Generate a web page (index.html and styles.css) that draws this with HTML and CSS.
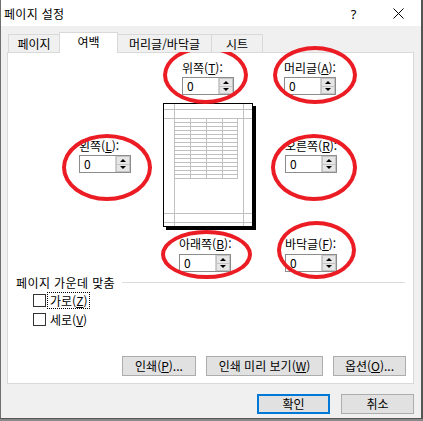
FILE: index.html
```html
<!DOCTYPE html>
<html lang="ko">
<head>
<meta charset="utf-8">
<title>페이지 설정</title>
<link rel="stylesheet" href="styles.css">
</head>
<body>
<div class="window">
  <div class="titlebar">
    <span class="title">페이지 설정</span>
    <span class="cap-btn help">?</span>
    <span class="cap-btn close">
      <svg width="11" height="11" viewBox="0 0 11 11"><path d="M0.5 0.5 L10.5 10.5 M10.5 0.5 L0.5 10.5" stroke="#000" stroke-width="1" fill="none"/></svg>
    </span>
  </div>
  <div class="content">
    <div class="tabs">
      <div class="tab">페이지</div>
      <div class="tab active">여백</div>
      <div class="tab tab-wide">머리글/바닥글</div>
      <div class="tab">시트</div>
    </div>
    <div class="panel">
      <div class="margins">
        <div class="field f-top">
          <div class="lbl">위쪽(<u>T</u>):</div>
          <div class="spin"><span class="val">0</span><span class="arrows"><span class="arr"><i class="up"></i></span><span class="arr"><i class="down"></i></span></span></div>
        </div>
        <div class="field f-header">
          <div class="lbl">머리글(<u>A</u>):</div>
          <div class="spin"><span class="val">0</span><span class="arrows"><span class="arr"><i class="up"></i></span><span class="arr"><i class="down"></i></span></span></div>
        </div>
        <div class="field f-left">
          <div class="lbl">왼쪽(<u>L</u>):</div>
          <div class="spin"><span class="val">0</span><span class="arrows"><span class="arr"><i class="up"></i></span><span class="arr"><i class="down"></i></span></span></div>
        </div>
        <div class="preview">
          <svg width="93" height="127" viewBox="0 0 93 127">
            <rect x="3" y="3" width="90" height="124" fill="#000"/>
            <rect x="0.5" y="0.5" width="89" height="123" fill="#fff" stroke="#000"/>
            <g stroke="#c0c0c0" stroke-width="1" fill="none">
              <path d="M11.5 1 V123 M80.5 1 V123 M1 6.5 H89 M1 15.5 H89 M1 110.5 H89 M1 119.5 H89"/>
              <path d="M27.5 15 V76 M43.5 15 V76 M59.5 15 V76 M74.5 15 V76"/>
              <path d="M11 19.5 H75 M11 23.5 H75 M11 27.5 H75 M11 31.5 H75 M11 35.5 H75 M11 39.5 H75 M11 43.5 H75 M11 47.5 H75 M11 51.5 H75 M11 55.5 H75 M11 59.5 H75 M11 63.5 H75 M11 67.5 H75 M11 71.5 H75 M11 75.5 H75"/>
            </g>
          </svg>
        </div>
        <div class="field f-right">
          <div class="lbl">오른쪽(<u>R</u>):</div>
          <div class="spin"><span class="val">0</span><span class="arrows"><span class="arr"><i class="up"></i></span><span class="arr"><i class="down"></i></span></span></div>
        </div>
        <div class="field f-bottom">
          <div class="lbl">아래쪽(<u>B</u>):</div>
          <div class="spin"><span class="val">0</span><span class="arrows"><span class="arr"><i class="up"></i></span><span class="arr"><i class="down"></i></span></span></div>
        </div>
        <div class="field f-footer">
          <div class="lbl">바닥글(<u>F</u>):</div>
          <div class="spin"><span class="val">0</span><span class="arrows"><span class="arr"><i class="up"></i></span><span class="arr"><i class="down"></i></span></span></div>
        </div>
      </div>
      <div class="center-group">
        <div class="group-title">페이지 가운데 맞춤</div>
        <label class="check"><span class="box"></span><span class="check-lbl focused">가로(<u>Z</u>)</span></label>
        <label class="check"><span class="box"></span><span class="check-lbl">세로(<u>V</u>)</span></label>
      </div>
      <div class="panel-buttons">
        <button class="btn b-print">인쇄(<u>P</u>)...</button>
        <button class="btn b-preview">인쇄 미리 보기(<u>W</u>)</button>
        <button class="btn b-options">옵션(<u>O</u>)...</button>
      </div>
    </div>
    <div class="dialog-buttons">
      <button class="btn default">확인</button>
      <button class="btn">취소</button>
    </div>
  </div>
  <div class="mark m-top"></div>
  <div class="mark m-header"></div>
  <div class="mark m-left"></div>
  <div class="mark m-right"></div>
  <div class="mark m-bottom"></div>
  <div class="mark m-footer"></div>
</div>
</body>
</html>
```
FILE: styles.css
```css
* { box-sizing: border-box; }
html, body { margin: 0; padding: 0; }
body {
  background: #8a8a8a;
  font-family: "Noto Sans CJK KR", "Noto Sans", sans-serif;
  font-size: 12px;
  color: #000;
  width: 423px;
  height: 421px;
  overflow: hidden;
}
.window {
  position: relative;
  width: 423px;
  height: 419px;
  background: #f0f0f0;
  border-left: 1px solid #6e6e6e;
  border-right: 2px solid #555;
  border-bottom: 1px solid #555;
}
.titlebar {
  height: 26px;
  background: #fff;
  display: flex;
  align-items: center;
}
.title {
  flex: 1;
  padding-left: 3px;
  line-height: 15px;
  letter-spacing: 0.3px;
}
.cap-btn {
  width: 45px;
  height: 26px;
  display: flex;
  align-items: center;
  justify-content: center;
}
.help { font-family: "Noto Sans", sans-serif; font-size: 13px; padding-top: 1px; }
.close svg { display: block; margin-top: 1px; }

.content { padding-top: 6px; }
.tabs {
  display: flex;
  align-items: flex-end;
  height: 21px;
  margin-left: 7px;
  margin-bottom: -1px;
  position: relative;
  z-index: 1;
}
.tab {
  min-width: 52px;
  height: 18px;
  margin-bottom: 1px;
  padding: 0 8px;
  border: 1px solid #d9d9d9;
  border-bottom: none;
  margin-right: -1px;
  background: #f0f0f0;
  text-align: center;
  line-height: 17px;
  white-space: nowrap;
}
.tab.tab-wide { min-width: 95px; }
.tab.active {
  min-width: 59px;
  height: 21px;
  margin-bottom: 0;
  background: #fff;
  line-height: 17px;
  position: relative;
  z-index: 2;
}
.panel {
  margin-left: 6px;
  width: 407px;
  height: 332px;
  background: #fff;
  border: 1px solid #d9d9d9;
  display: flex;
  flex-direction: column;
  padding-bottom: 7px;
}
.margins {
  display: grid;
  grid-template-columns: 155px 113px 1fr;
  grid-template-rows: auto auto auto;
  padding-top: 7px;
}
.field { display: flex; flex-direction: column; gap: 2px; }
.lbl { line-height: 15px; white-space: nowrap; }
.f-top { grid-column: 2; grid-row: 1; margin-left: 19px; }
.f-header { grid-column: 3; grid-row: 1; margin-left: 8px; }
.f-left { grid-column: 1; grid-row: 2; margin-left: 71px; margin-top: 43px; align-self: start; }
.preview { grid-column: 2; grid-row: 2; margin-top: 8px; }
.preview svg { display: block; }
.f-right { grid-column: 3; grid-row: 2; margin-left: 9px; margin-top: 43px; align-self: start; }
.f-bottom { grid-column: 2; grid-row: 3; margin-left: 16px; margin-top: 6px; gap: 3px; }
.f-footer { grid-column: 3; grid-row: 3; margin-left: 9px; margin-top: 6px; gap: 3px; }

.spin {
  display: flex;
  width: 52px;
  height: 18px;
  border: 1px solid #8c8c8c;
  background: #fff;
}
.val { flex: 1; padding-left: 4px; line-height: 16px; }
.arrows {
  width: 15px;
  display: flex;
  flex-direction: column;
  border-left: 1px solid #d0d0d0;
}
.arr {
  flex: 1;
  background: #e6e6e6;
  border: 1px solid #c4c4c4;
  display: flex;
  align-items: center;
  justify-content: center;
}
.arr + .arr { border-top: none; }
.up, .down {
  display: block;
  width: 0;
  height: 0;
  border-left: 3px solid transparent;
  border-right: 3px solid transparent;
}
.up { border-bottom: 3px solid #000; }
.down { border-top: 3px solid #000; }

.center-group { margin-left: 8px; margin-top: 3px; }
.group-title {
  display: flex;
  align-items: center;
  line-height: 15px;
  white-space: nowrap;
  letter-spacing: 0.4px;
}
.group-title::after {
  content: "";
  flex: 1;
  border-top: 1px solid #dcdcdc;
  margin-left: 7px;
  margin-right: 8px;
}
.check {
  display: flex;
  align-items: center;
  height: 19px;
  margin-left: 17px;
}
.check:first-of-type { margin-top: 1px; }
.box {
  width: 13px;
  height: 13px;
  border: 1px solid #333;
  background: #fff;
}
.check-lbl { margin-left: 2px; padding: 0 2px; line-height: 15px; }
.check-lbl.focused { outline: 1px dotted #000; }

.panel-buttons {
  margin-top: auto;
  display: flex;
  justify-content: flex-end;
  gap: 10px;
  padding-right: 7px;
}
.btn {
  font: inherit;
  color: #000;
  height: 20px;
  padding: 0;
  background: #e1e1e1;
  border: 1px solid #adadad;
  line-height: 16px;
  white-space: nowrap;
}
.b-print { width: 74px; }
.b-preview { width: 117px; }
.b-options { width: 73px; }
.dialog-buttons {
  margin-left: 6px;
  width: 407px;
  margin-top: 10px;
  display: flex;
  justify-content: flex-end;
  gap: 11px;
}
.dialog-buttons .btn { width: 73px; }
.btn.default { border: 2px solid #0078d7; }

.mark {
  position: absolute;
  border: 4px solid #ec1c24;
  border-radius: 50%;
}
.m-top { left: 162px; top: 46px; width: 85px; height: 58px; }
.m-header { left: 272px; top: 46px; width: 84px; height: 58px; }
.m-left { left: 61px; top: 134px; width: 90px; height: 67px; }
.m-right { left: 270px; top: 134px; width: 86px; height: 67px; }
.m-bottom { left: 160px; top: 230px; width: 91px; height: 49px; }
.m-footer { left: 276px; top: 221px; width: 79px; height: 58px; }
```
